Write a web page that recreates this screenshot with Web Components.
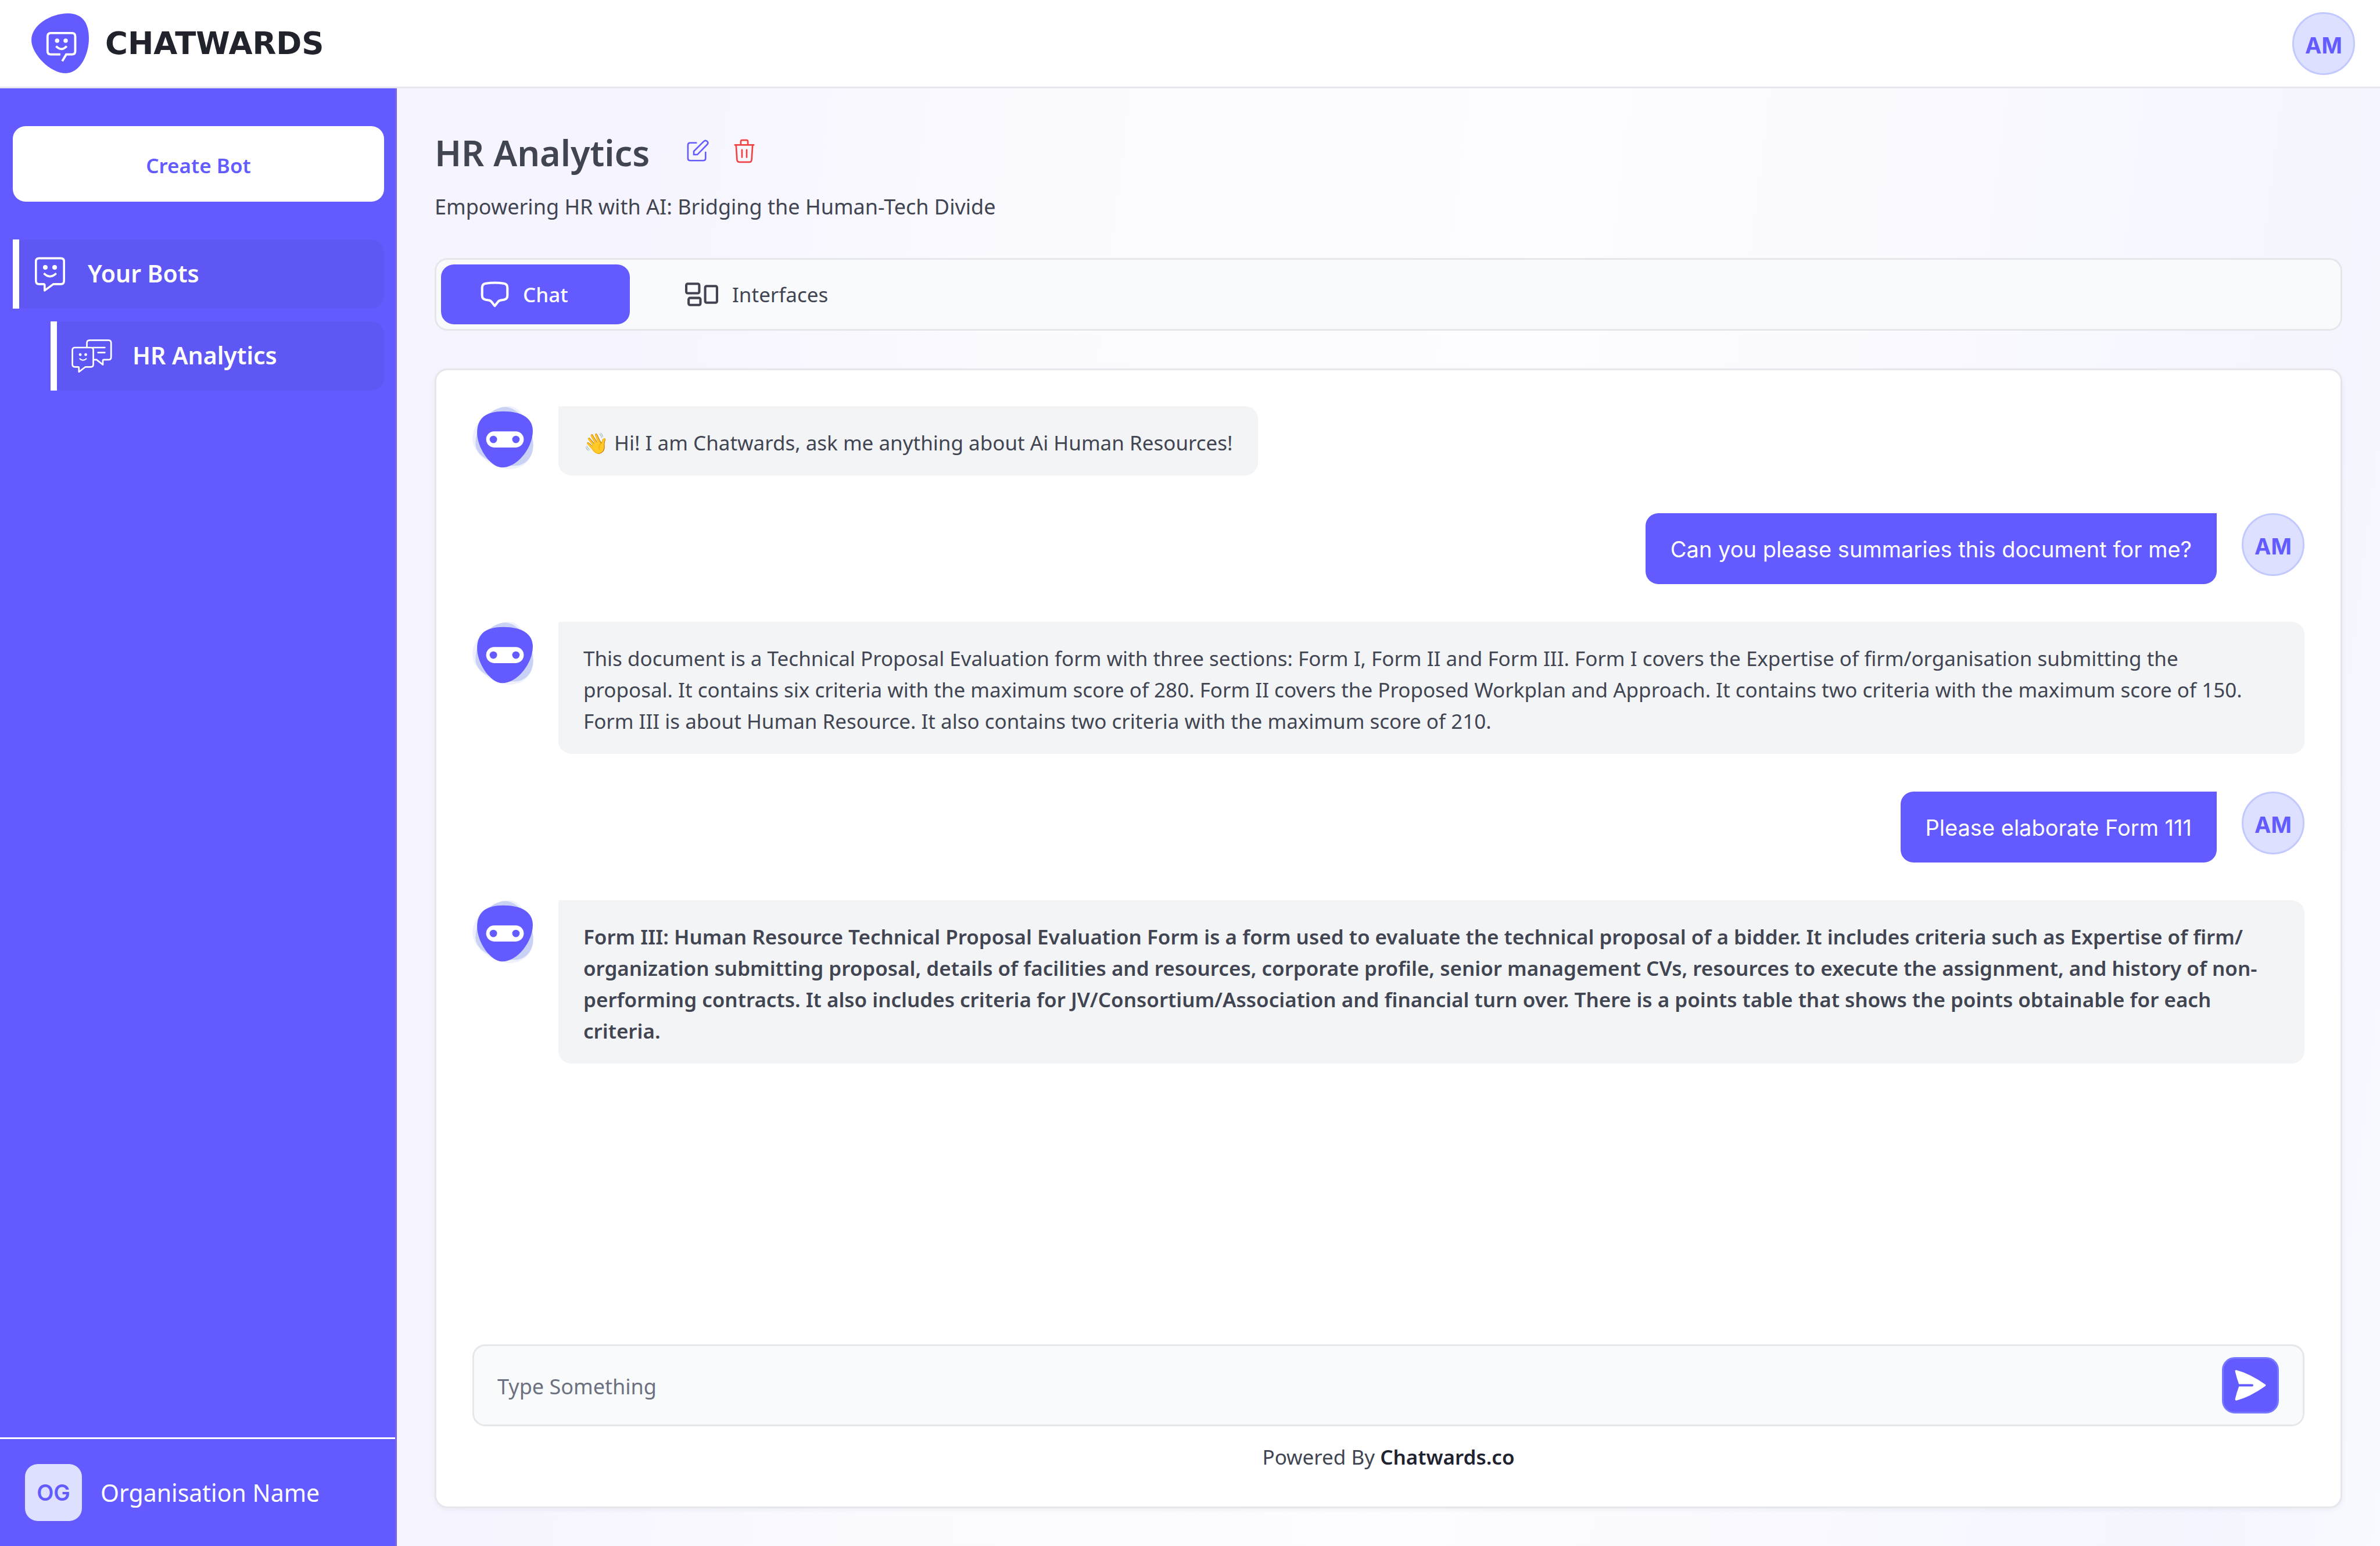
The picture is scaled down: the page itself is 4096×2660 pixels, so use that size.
<!DOCTYPE html>
<html lang="en">
<head>
<meta charset="utf-8">
<title>Chatwards</title>
<style>
  :root {
    --brand: #635bff;
    --brand-soft: #dde1ff;
    --brand-line: #c1c9ff;
    --ink: #414552;
    --line: #e5e7eb;
    --radius: 22px;
    --sm: 35px;
    --md: 41px;
    --inter: 38px;
  }
  html, body { margin: 0; }
  body {
    font-family: "Noto Sans", "Open Sans", sans-serif;
    font-size: var(--sm);
    line-height: 54px;
    color: var(--ink);
    background: #fff;
  }
</style>
</head>
<body>
<app-shell>
  <app-header slot="header">
    <brand-logo>CHATWARDS</brand-logo>
    <user-avatar slot="user">AM</user-avatar>
  </app-header>
  <side-bar slot="side">
    <span slot="action">Create Bot</span>
    <nav-item icon="bot">Your Bots</nav-item>
    <nav-item icon="bots" nested>HR Analytics</nav-item>
    <org-badge slot="footer" initials="OG">Organisation Name</org-badge>
  </side-bar>
  <bot-page>
    <span slot="title">HR Analytics</span>
    <span slot="subtitle">Empowering HR with AI: Bridging the Human-Tech Divide</span>
    <tab-bar slot="tabs">
      <tab-button icon="chat" active>Chat</tab-button>
      <tab-button icon="panels">Interfaces</tab-button>
    </tab-bar>
    <chat-panel>
      <bot-message>👋 Hi! I am Chatwards, ask me anything about Ai Human Resources!</bot-message>
      <user-message>Can you please summaries this document for me?</user-message>
      <bot-message wide>This document is a Technical Proposal Evaluation form with three sections: Form I, Form II and Form III. Form I covers the Expertise of firm/organisation submitting the<br>proposal. It contains six criteria with the maximum score of 280. Form II covers the Proposed Workplan and Approach. It contains two criteria with the maximum score of 150.<br>Form III is about Human Resource. It also contains two criteria with the maximum score of 210.</bot-message>
      <user-message>Please elaborate Form 111</user-message>
      <bot-message wide strong>Form III: Human Resource Technical Proposal Evaluation Form is a form used to evaluate the technical proposal of a bidder. It includes criteria such as Expertise of firm/<br>organization submitting proposal, details of facilities and resources, corporate profile, senior management CVs, resources to execute the assignment, and history of non-<br>performing contracts. It also includes criteria for JV/Consortium/Association and financial turn over. There is a points table that shows the points obtainable for each<br>criteria.</bot-message>
      <chat-composer slot="composer"></chat-composer>
      <span slot="credit">Powered By <b style="font-weight:600;color:#1f2330">Chatwards.co</b></span>
    </chat-panel>
  </bot-page>
</app-shell>

<script>
const ICONS = {
  bot: [58, 60, '79 65 259 265', `<g fill="none" stroke="currentColor" stroke-width="16" stroke-linejoin="round"><path d="M120 74H288Q312 74 312 98V248Q312 273 288 273H230L163 322V282Q163 273 154 273H120Q96 273 96 248V98Q96 74 120 74Z"/><path d="M157 190Q204 237 252 190"/></g><circle cx="168" cy="144" r="18" fill="currentColor"/><circle cx="240" cy="144" r="18" fill="currentColor"/>`],
  bots: [70, 57, '361 695 311 253', `<g fill="none" stroke="currentColor" stroke-width="12" stroke-linejoin="round" stroke-linecap="round"><path d="M388 757H510Q528 757 528 776V886Q528 905 510 905H468L418 943V912Q418 905 411 905H388Q368 905 368 886V776Q368 757 388 757Z"/><path d="M479 752V722Q479 701 500 701H644Q664 701 664 722V830Q664 850 644 850H609Q601 850 601 858V888L553 850H534M526 757H616M564 795H616"/></g><path d="M422 840Q449 867 477 840" fill="none" stroke="currentColor" stroke-width="9"/><circle cx="428" cy="811" r="10.5" fill="currentColor"/><circle cx="470" cy="811" r="10.5" fill="currentColor"/>`],
  chat: [49, 45, '0 0 72 66', `<path fill="none" stroke="currentColor" stroke-width="6" stroke-linejoin="round" d="M4 16Q4 7 13 5.500Q36 1.500 59 5.500Q68 7 68 16V36Q68 45 59 46.500L50 48Q46 49 44 52L36 62L28 52Q26 49 22 48L13 46.500Q4 45 4 36Z"/>`],
  panels: [57, 41, '66 1161 252 180', `<g fill="none" stroke="currentColor" stroke-width="18"><rect x="75" y="1170" width="99" height="72" rx="11"/><rect x="93" y="1278" width="90" height="54" rx="11"/><rect x="219" y="1188" width="90" height="126" rx="11"/></g>`],
  edit: [54, 54, '40 42 240 240', `<g fill="none" stroke="currentColor" stroke-width="11.500" stroke-linecap="round" stroke-linejoin="round"><path d="M148 99H102Q84 99 84 117V216Q84 234 102 234H201Q219 234 219 216V171"/><path stroke-linejoin="miter" d="M129 189V163L206 87Q218 76 231 87Q243 99 232 111L156 189Z"/></g>`],
  trash: [54, 54, '396 42 240 240', `<g fill="none" stroke="currentColor" stroke-width="12" stroke-linecap="round" stroke-linejoin="round"><path d="M444 115H588M489 112V88Q489 78 499 78H533Q543 78 543 88V112M453 118L460 228Q462 246 478 246H554Q570 246 572 228L579 118M498 152V209M534 152V209"/></g>`],
  send: [54, 53, '0 0 79 79', `<path fill="currentColor" d="M3 .2Q38 9 78 37.500Q80 39.500 78 41.500Q38 70 3 78.700Q-.5 78 .3 74.500Q4 58 10 42.300H44A2.900 2.900 0 0 0 44 36.500H10Q4 20 .3 4Q-.5 0 3 .2Z"/>`],
  logo: [99, 103, '57 48 438 456', `<path fill="#635bff" d="M338 48C445 50 495 120 495 240C495 365 425 504 320 504C200 504 57 358 57 250C57 140 200 48 338 48Z"/><g fill="none" stroke="#fff" stroke-width="17"><path d="M278 361H205Q180 361 180 336V223Q180 198 205 198H366Q391 198 391 223V336Q391 361 366 361H322L292 412"/><path d="M245 298Q286 341 326 298"/></g><circle cx="253" cy="256" r="16.500" fill="#fff"/><circle cx="318" cy="256" r="16.500" fill="#fff"/>`],
  face: [108, 108, '0 0 160 160', `<path fill="#eff2fd" d="M96 0C125 0 155 60 155 100C155 140 125 160 96 160C50 160 0 120 0 83C0 40 50 0 96 0Z"/><path fill="#c9d1f5" d="M84 2C120 2 155 60 155 98C155 130 135 152 105 152C60 152 8 130 8 95C8 50 45 2 84 2Z"/><path fill="#635bff" d="M79 13C125 13 154 30 154 63C154 105 115 156 76 156C45 156 12 105 12 67C12 30 35 13 79 13Z"/><rect x="35" y="64" width="96" height="41" rx="20.500" fill="#fff"/><circle cx="53.500" cy="84.500" r="9.500" fill="#635bff"/><circle cx="111" cy="84.500" r="9.500" fill="#635bff"/>`]
};
const icon = name => {
  const [w, h, box, body] = ICONS[name];
  return `<svg width="${w}" height="${h}" viewBox="${box}" aria-hidden="true">${body}</svg>`;
};
const define = (tag, render) => customElements.define(tag, class extends HTMLElement {
  connectedCallback() {
    if (this.shadowRoot) return;
    this.attachShadow({ mode: 'open' }).innerHTML =
      `<style>*{box-sizing:border-box}:host{box-sizing:border-box}svg{display:block;flex:none}button,input{font:inherit;color:inherit;margin:0}button{cursor:pointer}</style>` + render(this);
  }
});

define('app-shell', () => `
  <style>
    :host { display: flex; flex-direction: column; min-height: 100vh; }
    .body { display: flex; flex: 1; }
    slot:not([name]) { display: contents; }
  </style>
  <slot name="header"></slot>
  <div class="body"><slot name="side"></slot><slot></slot></div>`);

define('app-header', () => `
  <style>
    :host { display: block; background: #fff; border-bottom: 3px solid var(--line); }
    header { display: flex; align-items: center; justify-content: space-between; height: 149px; padding: 0 43px 0 54px; }
  </style>
  <header><slot></slot><slot name="user"></slot></header>`);

define('brand-logo', () => `
  <style>
    :host { display: flex; align-items: center; gap: 28px; color: #20232b;
      font: bold 53px/60px "DejaVu Sans", sans-serif; }
  </style>
  ${icon('logo')}<span><slot></slot></span>`);

define('user-avatar', () => `
  <style>
    :host { display: flex; align-items: center; justify-content: center; flex: none;
      width: 108px; height: 108px; padding-top: 6px; border-radius: 50%;
      border: 3px solid var(--brand-line); background: var(--brand-soft); color: var(--brand);
      font: 700 var(--inter)/54px Inter, sans-serif; }
  </style>
  <slot></slot>`);

define('side-bar', () => `
  <style>
    :host { display: flex; flex-direction: column; flex: none; width: 683px;
      background: var(--brand); border-right: 3px solid #7666e6; color: #fff; }
    button { height: 130px; margin: 65px 19px 65px 22px; padding: 6px 0 0; border: 0; border-radius: var(--radius);
      background: #fff; color: var(--brand); font-weight: 600; }
    nav { display: flex; flex-direction: column; gap: 22px; flex: 1; padding: 0 19px 0 22px; }
    footer { border-top: 3px solid #fff; padding: 43px; }
  </style>
  <button type="button"><slot name="action"></slot></button>
  <nav><slot></slot></nav>
  <footer><slot name="footer"></slot></footer>`);

define('nav-item', el => `
  <style>
    :host { display: block; }
    :host([nested]) { margin-left: 65px; }
    a { display: flex; height: 119px; color: #fff; text-decoration: none; font-size: var(--md); font-weight: 600;
      background: linear-gradient(#fff, #fff) left / 11px 100% no-repeat; padding-left: 0; }
    .row { display: flex; flex: 1; align-items: center; gap: 35px; padding-left: 36px;
      background: linear-gradient(90deg, #fff 11px, #5e57f3 11px); border-radius: var(--radius); }
    .label { padding-bottom: 3px; }
  </style>
  <a href="#"><span class="row">${icon(el.getAttribute('icon'))}<span class="label"><slot></slot></span></span></a>`);

define('org-badge', el => `
  <style>
    :host { display: flex; align-items: center; gap: 32px; font-size: var(--md); }
    b { display: flex; align-items: center; justify-content: center; width: 98px; height: 98px;
      border-radius: var(--radius); background: var(--brand-soft); color: var(--brand);
      font: 600 var(--inter)/54px Inter, sans-serif; }
  </style>
  <b>${el.getAttribute('initials')}</b><span><slot></slot></span>`);

define('bot-page', () => `
  <style>
    :host { display: flex; flex: 1; min-width: 0; }
    main { display: flex; flex-direction: column; flex: 1; min-width: 0; padding: 65px;
      background: linear-gradient(97deg, #f5f4ff 0, #f6f5ff 12%, #fbfbff 32%, #fdfdff 55%, #f5f5ff 92%, #f9faff 100%); }
    .head { display: flex; align-items: flex-start; }
    h1 { margin: 0 56px 0 0; padding-top: 2px; font-size: 61px; line-height: 87px; font-weight: 600; }
    button { padding: 0; border: 0; background: none; color: var(--brand); margin: 16px 26px 0 0; }
    .del { color: #ef4444; }
    p { margin: 23px 0 61px; font-size: 36px; }
  </style>
  <main>
    <div class="head"><h1><slot name="title"></slot></h1>
      <button type="button" aria-label="Edit">${icon('edit')}</button>
      <button type="button" class="del" aria-label="Delete">${icon('trash')}</button></div>
    <p><slot name="subtitle"></slot></p>
    <slot name="tabs"></slot>
    <slot></slot>
  </main>`);

define('tab-bar', () => `
  <style>
    :host { display: flex; gap: 27px; padding: 8px; margin-bottom: 65px;
      border: 3px solid var(--line); border-radius: var(--radius); background: #f9fafc; }
  </style>
  <slot></slot>`);

define('tab-button', el => `
  <style>
    :host { display: block; }
    button { display: flex; align-items: center; gap: 24px; height: 103px; min-width: 325px; padding: 0 68px;
      border: 0; border-radius: var(--radius); background: none; }
    :host([active]) button { background: var(--brand); color: #fff; font-weight: 500; }
  </style>
  <button type="button">${icon(el.getAttribute('icon'))}<slot></slot></button>`);

define('chat-panel', () => `
  <style>
    :host { display: flex; flex-direction: column; flex: 1; padding: 62px 62px 58px;
      border: 3px solid var(--line); border-radius: var(--radius); background: #fff;
      box-shadow: 0 3px 8px rgba(30, 30, 60, .06); }
    .log { display: flex; flex-direction: column; gap: 65px; flex: 1; }
    .credit { margin-top: 26px; text-align: center; }
  </style>
  <div class="log"><slot></slot></div>
  <slot name="composer"></slot>
  <div class="credit"><slot name="credit"></slot></div>`);

define('bot-message', () => `
  <style>
    :host { display: flex; align-items: flex-start; gap: 40px; }
    div { padding: 36px 43px 29px; border-radius: 0 var(--radius) var(--radius) var(--radius); background: #f3f4f6; }
    :host([wide]) div { flex: 1; white-space: nowrap; }
    :host([strong]) div { font-weight: 600; }
  </style>
  ${icon('face')}<div><slot></slot></div>`);

define('user-message', () => `
  <style>
    :host { display: flex; justify-content: flex-end; align-items: flex-start; gap: 43px; }
    div { padding: 35px 43px 33px; border-radius: var(--radius) 0 var(--radius) var(--radius);
      background: var(--brand); color: #fff; font-family: Inter, sans-serif; font-size: var(--inter); }
  </style>
  <div><slot></slot></div><user-avatar>AM</user-avatar>`);

define('chat-composer', () => `
  <style>
    :host { display: block; }
    form { display: flex; align-items: center; padding: 19px 41px 19px 40px;
      border: 3px solid var(--line); border-radius: var(--radius); background: #f9fafc; }
    input { flex: 1; padding: 5px 0 0; border: 0; outline: 0; background: none; font-size: 36px; }
    input::placeholder { color: #6c7180; opacity: 1; }
    button { display: flex; align-items: center; justify-content: center; width: 98px; height: 97px; padding: 0;
      border: 3px solid #7679ff; border-radius: var(--radius); background: var(--brand); color: #fff; }
  </style>
  <form><input type="text" aria-label="Message" placeholder="Type Something">
    <button type="button" aria-label="Send">${icon('send')}</button></form>`);
</script>
</body>
</html>
